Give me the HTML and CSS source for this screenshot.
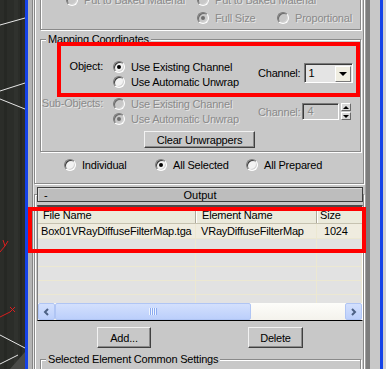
FILE: index.html
```html
<!DOCTYPE html>
<html lang="en">
<head>
    <meta charset="UTF-8">
    <meta name="viewport" content="width=device-width, initial-scale=1.0">
    <title>Render To Texture - Output</title>
    <link rel="stylesheet" href="styles.css">
</head>
<body>
    <div class="screen">
        <div class="viewport">
            <svg width="25" height="369" viewBox="0 0 25 369">
                <rect width="25" height="369" fill="#2b2d29"/>
                <rect x="4" y="0" width="3" height="369" fill="#262824"/>
                <rect x="14" y="0" width="4" height="369" fill="#30322e"/>
                <rect x="20" y="0" width="2" height="369" fill="#242622"/>
                <path d="M10 369L25 352L25 369Z" fill="#4a4b48"/>
                <g stroke="#e6e6e6" stroke-width="1" fill="none">
                    <path d="M0 25L25 18"/>
                    <path d="M0 91L25 83"/>
                    <path d="M0 99L25 109"/>
                    <path d="M0 335L25 348"/>
                    <path d="M0 364L18 355"/>
                </g>
                <g stroke="#d81e1e" stroke-width="1" fill="none">
                    <path d="M0 252L5 246M5 246L3 240M5 246L8 241"/>
                    <path d="M0 317L10 312M10 307L15 312M15 307L10 312"/>
                </g>
            </svg>
        </div>
        <div class="edge-left"></div>
        <div class="panel">
            <div class="rollout rollout-first">
                <div class="group group-bake">
                    <div class="opt-grid">
                        <label class="opt disabled"><span class="radio"></span>Put to Baked Material</label>
                        <label class="opt disabled"><span class="radio"></span>Put to Baked Material</label>
                        <span></span>
                        <span></span>
                        <label class="opt disabled"><span class="radio checked"></span>Full Size</label>
                        <label class="opt disabled"><span class="radio"></span>Proportional</label>
                    </div>
                </div>

                <div class="group group-mapping">
                    <div class="group-title">Mapping Coordinates</div>
                    <div class="map-block map-block-first">
                        <div class="map-label">Object:</div>
                        <div class="map-opts">
                            <label class="opt"><span class="radio checked"></span>Use Existing Channel</label>
                            <label class="opt"><span class="radio"></span>Use Automatic Unwrap</label>
                        </div>
                        <div class="channel channel-combo">
                            <span>Channel:</span>
                            <div class="combo">
                                <span class="combo-value">1</span>
                                <span class="combo-btn"></span>
                            </div>
                        </div>
                    </div>
                    <div class="map-block disabled">
                        <div class="map-label">Sub-Objects:</div>
                        <div class="map-opts">
                            <label class="opt"><span class="radio"></span>Use Existing Channel</label>
                            <label class="opt"><span class="radio checked"></span>Use Automatic Unwrap</label>
                        </div>
                        <div class="channel channel-spin">
                            <span>Channel:</span>
                            <div class="spin-field">4</div>
                            <div class="spin-arrows">
                                <span class="spin-up"></span>
                                <span class="spin-down"></span>
                            </div>
                        </div>
                    </div>
                    <button class="btn btn-clear">Clear Unwrappers</button>
                </div>

                <div class="opt-row">
                    <label class="opt"><span class="radio"></span>Individual</label>
                    <label class="opt"><span class="radio checked"></span>All Selected</label>
                    <label class="opt"><span class="radio"></span>All Prepared</label>
                </div>
            </div>

            <div class="rollout rollout-output">
                <div class="rollout-head">
                    <span class="rollout-sign">-</span>
                    <span>Output</span>
                </div>

                <div class="listview">
                    <div class="lv-head">
                        <div class="lv-cell c1">File Name</div>
                        <div class="lv-cell c2">Element Name</div>
                        <div class="lv-cell c3">Size</div>
                    </div>
                    <div class="lv-rows">
                        <div class="lv-row lv-item">
                            <div class="lv-cell c1">Box01VRayDiffuseFilterMap.tga</div>
                            <div class="lv-cell c2">VRayDiffuseFilterMap</div>
                            <div class="lv-cell c3">1024</div>
                        </div>
                        <div class="lv-row"><div class="lv-cell c1"></div><div class="lv-cell c2"></div><div class="lv-cell c3"></div></div>
                        <div class="lv-row"><div class="lv-cell c1"></div><div class="lv-cell c2"></div><div class="lv-cell c3"></div></div>
                        <div class="lv-row"><div class="lv-cell c1"></div><div class="lv-cell c2"></div><div class="lv-cell c3"></div></div>
                        <div class="lv-row"><div class="lv-cell c1"></div><div class="lv-cell c2"></div><div class="lv-cell c3"></div></div>
                        <div class="lv-row"><div class="lv-cell c1"></div><div class="lv-cell c2"></div><div class="lv-cell c3"></div></div>
                    </div>
                    <div class="hscroll">
                        <span class="sb-btn">
                            <svg width="7" height="8" viewBox="0 0 7 8"><path d="M5 1L2 4L5 7" stroke="#4d6185" stroke-width="2" fill="none"/></svg>
                        </span>
                        <span class="sb-thumb"><span class="sb-grip"></span></span>
                        <span class="sb-track"></span>
                        <span class="sb-btn">
                            <svg width="7" height="8" viewBox="0 0 7 8"><path d="M2 1L5 4L2 7" stroke="#4d6185" stroke-width="2" fill="none"/></svg>
                        </span>
                    </div>
                </div>

                <div class="btn-row">
                    <button class="btn btn-add">Add...</button>
                    <button class="btn btn-delete">Delete</button>
                </div>

                <div class="group group-common">
                    <div class="group-title">Selected Element Common Settings</div>
                </div>
            </div>
        </div>
        <div class="edge-right"></div>

        <!-- red annotation boxes drawn over the panel -->
        <div class="callout callout-object"></div>
        <div class="callout callout-list"></div>
    </div>
</body>
</html>
```

FILE: styles.css
```css
* {
    box-sizing: border-box;
}
body {
    margin: 0;
    font-family: "Liberation Sans", Arial, sans-serif;
    font-size: 11px;
    letter-spacing: -0.2px;
    color: #000;
    background: #c8c8c8;
}
.screen {
    position: relative;
    display: flex;
    width: 386px;
    height: 369px;
    overflow: hidden;
}
.viewport {
    flex: none;
    width: 25px;
}
.viewport svg {
    display: block;
}
.edge-left {
    flex: none;
    width: 8px;
    background: #b4b4b4;
    border-left: 3px solid #1543e8;
    border-right: 1px solid #858585;
}
.panel {
    flex: none;
    width: 332px;
    border-left: 1px solid #e6e6e6;
    background: #c8c8c8;
}
.edge-right {
    flex: none;
    width: 21px;
    background: linear-gradient(to right, #a2a2a2 0 1px, #7e7e7e 1px 5px, #c8c8c8 5px 15px, #1543e8 15px 18px, #d2d2d2 18px);
}

/* rollouts and group boxes */
.rollout {
    margin-right: 1px;
    border: 1px solid #8a8a8a;
    box-shadow: inset 1px 1px 0 #fff, 1px 1px 0 #fff;
}
.rollout-first {
    margin-top: -25px;
    border-top: 0;
    padding-bottom: 11px;
}
.rollout-output {
    margin-top: 10px;
}
.group {
    margin: 0 2px 0 5px;
    border: 1px solid #8a8a8a;
    box-shadow: inset 1px 1px 0 #fff, 1px 1px 0 #fff;
}
.group-title {
    width: fit-content;
    margin: -7px 0 0 5px;
    padding: 0 2px;
    line-height: 13px;
    background: #c8c8c8;
}
.group-bake {
    margin-top: 5px;
    padding: 11px 0 4px 25px;
}
.group-mapping {
    margin-top: 9px;
    padding-bottom: 3px;
}
.group-common {
    margin-top: 11px;
    height: 30px;
}

/* radio options */
.opt-grid {
    display: grid;
    grid-template-columns: 131px 80px auto;
    grid-auto-rows: 15px;
    row-gap: 3px;
}
.opt {
    display: flex;
    align-items: center;
    height: 15px;
    white-space: nowrap;
}
.radio {
    flex: none;
    display: flex;
    align-items: center;
    justify-content: center;
    width: 12px;
    height: 12px;
    margin-right: 6px;
    border-radius: 50%;
    border: 1px solid;
    border-color: #7a7a7a #fff #fff #7a7a7a;
    box-shadow: inset 1px 1px 0 #3c3c3c, inset -1px -1px 0 #d4d4d4;
    background: #f2f2f2;
}
.radio.checked::after {
    content: "";
    width: 4px;
    height: 4px;
    border-radius: 50%;
    background: #000;
}
.disabled {
    color: #8a8a8a;
    text-shadow: 1px 1px 0 #e6e6e6;
}
.disabled .radio {
    background: #c8c8c8;
    box-shadow: inset 1px 1px 0 #6a6a6a, inset -1px -1px 0 #d4d4d4;
}
.disabled .radio.checked::after {
    background: #6e6e6e;
}
.opt-row {
    display: grid;
    grid-template-columns: 91px 91px auto;
    margin-top: 5px;
    padding-left: 29px;
}

/* mapping coordinates */
.map-block {
    display: flex;
    margin-top: 7px;
}
.map-block-first {
    margin-top: 13px;
}
.map-label {
    width: 62px;
    line-height: 15px;
    text-align: right;
}
.map-opts {
    width: 145px;
    margin-left: 10px;
}
.channel {
    display: flex;
    align-items: center;
    align-self: flex-start;
}
.channel-combo {
    margin-top: 4px;
}
.channel-spin {
    margin-top: 7px;
}
.combo {
    display: flex;
    align-items: center;
    width: 49px;
    height: 20px;
    margin-left: 4px;
    border: 1px solid;
    border-color: #7a7a7a #fff #fff #7a7a7a;
    box-shadow: inset 1px 1px 0 #3c3c3c;
    background: #e4e4e4;
}
.combo-value {
    padding-left: 3px;
}
.combo-btn {
    display: flex;
    align-items: center;
    justify-content: center;
    width: 16px;
    height: 16px;
    margin: 1px 1px 0 auto;
    border: 1px solid;
    border-color: #fff #7a7a7a #7a7a7a #fff;
    background: #f0eee2;
}
.combo-btn::after {
    content: "";
    border-left: 4px solid transparent;
    border-right: 4px solid transparent;
    border-top: 4px solid #000;
}
.spin-field {
    width: 37px;
    height: 17px;
    margin-left: 2px;
    padding-left: 4px;
    line-height: 15px;
    border: 1px solid;
    border-color: #7a7a7a #fff #fff #7a7a7a;
    box-shadow: inset 1px 1px 0 #3c3c3c;
}
.spin-arrows {
    display: flex;
    flex-direction: column;
    gap: 1px;
    margin-left: 2px;
}
.spin-up,
.spin-down {
    display: flex;
    align-items: center;
    justify-content: center;
    width: 10px;
    height: 8px;
    border: 1px solid;
    border-color: #fff #6a6a6a #6a6a6a #fff;
    background: #d8d8d8;
}
.spin-up::after {
    content: "";
    border-left: 3px solid transparent;
    border-right: 3px solid transparent;
    border-bottom: 3px solid #000;
}
.spin-down::after {
    content: "";
    border-left: 3px solid transparent;
    border-right: 3px solid transparent;
    border-top: 3px solid #000;
}

/* buttons */
.btn {
    display: block;
    padding: 0;
    font: inherit;
    letter-spacing: inherit;
    color: #000;
    background: #c8c8c8;
    border: 1px solid;
    border-color: #f2f2f2 #404040 #404040 #f2f2f2;
    box-shadow: inset -1px -1px 0 #8a8a8a;
}
.btn-clear {
    width: 111px;
    height: 17px;
    margin: 5px 0 0 103px;
}
.btn-row {
    display: flex;
    margin-top: 6px;
    padding-left: 62px;
}
.btn-add {
    width: 54px;
    height: 21px;
}
.btn-delete {
    width: 55px;
    height: 21px;
    margin-left: 97px;
}

/* output rollout */
.rollout-head {
    display: grid;
    grid-template-columns: 1fr auto 1fr;
    align-items: center;
    height: 15px;
    margin: -8px 0 0 2px;
    border: 1px solid #3e3e3e;
    background: #bdbdbd;
    box-shadow: inset 1px 1px 0 #dcdcdc;
    letter-spacing: 0;
}
.rollout-sign {
    padding-left: 6px;
}
.listview {
    margin: 3px 0 0 2px;
    border-style: solid;
    border-width: 2px 1px 1px;
    border-color: #4a4a4a #fff #000 #808080;
    background: #e2e2e2;
}
.lv-head {
    display: flex;
    height: 17px;
    align-items: center;
    background: #ebeadb;
    box-shadow: inset 0 1px 0 #fff;
    border-bottom: 1px solid #c6c2b0;
}
.lv-head .lv-cell {
    height: 100%;
    line-height: 16px;
    border-right: 1px solid #aca899;
    box-shadow: inset 1px 0 0 #fff;
}
.lv-head .c1 {
    padding-left: 5px;
    box-shadow: none;
}
.lv-head .c2 {
    padding-left: 6px;
}
.lv-head .c3 {
    padding-left: 3px;
    border-right: 0;
}
.lv-cell {
    flex: none;
    white-space: nowrap;
    overflow: hidden;
}
.c1 {
    width: 158px;
}
.c2 {
    width: 121px;
}
.c3 {
    flex: 1;
}
.lv-rows {
    height: 79px;
    overflow: hidden;
}
.lv-row {
    display: flex;
    height: 14px;
    border-bottom: 1px solid #ece8d2;
}
.lv-row .lv-cell {
    height: 100%;
    border-right: 1px solid #ece8d2;
}
.lv-item {
    height: 15px;
    line-height: 14px;
    background: #efecdf;
}
.lv-item .c1 {
    padding-left: 3px;
}
.lv-item .c2 {
    padding-left: 5px;
}
.lv-item .c3 {
    padding-left: 7px;
}

/* horizontal scrollbar */
.hscroll {
    display: flex;
    height: 17px;
    background: linear-gradient(#fdfdfa, #f4f2ec);
}
.sb-btn,
.sb-thumb {
    display: flex;
    align-items: center;
    justify-content: center;
    height: 17px;
    border: 1px solid #b0c5f4;
    border-radius: 2px;
    background: linear-gradient(#d3e0fd, #bccffb);
}
.sb-btn {
    flex: none;
    width: 17px;
}
.sb-thumb {
    flex: none;
    width: 196px;
}
.sb-track {
    flex: 1;
}
.sb-grip {
    width: 8px;
    height: 7px;
    background: repeating-linear-gradient(to right, #eef4fe 0 1px, #8cabf0 1px 2px);
}

/* red annotation boxes */
.callout {
    position: absolute;
    border: 4px solid #f00;
}
.callout-object {
    left: 57px;
    top: 42px;
    width: 303px;
    height: 55px;
}
.callout-list {
    left: 28px;
    top: 207px;
    width: 338px;
    height: 46px;
}
```
